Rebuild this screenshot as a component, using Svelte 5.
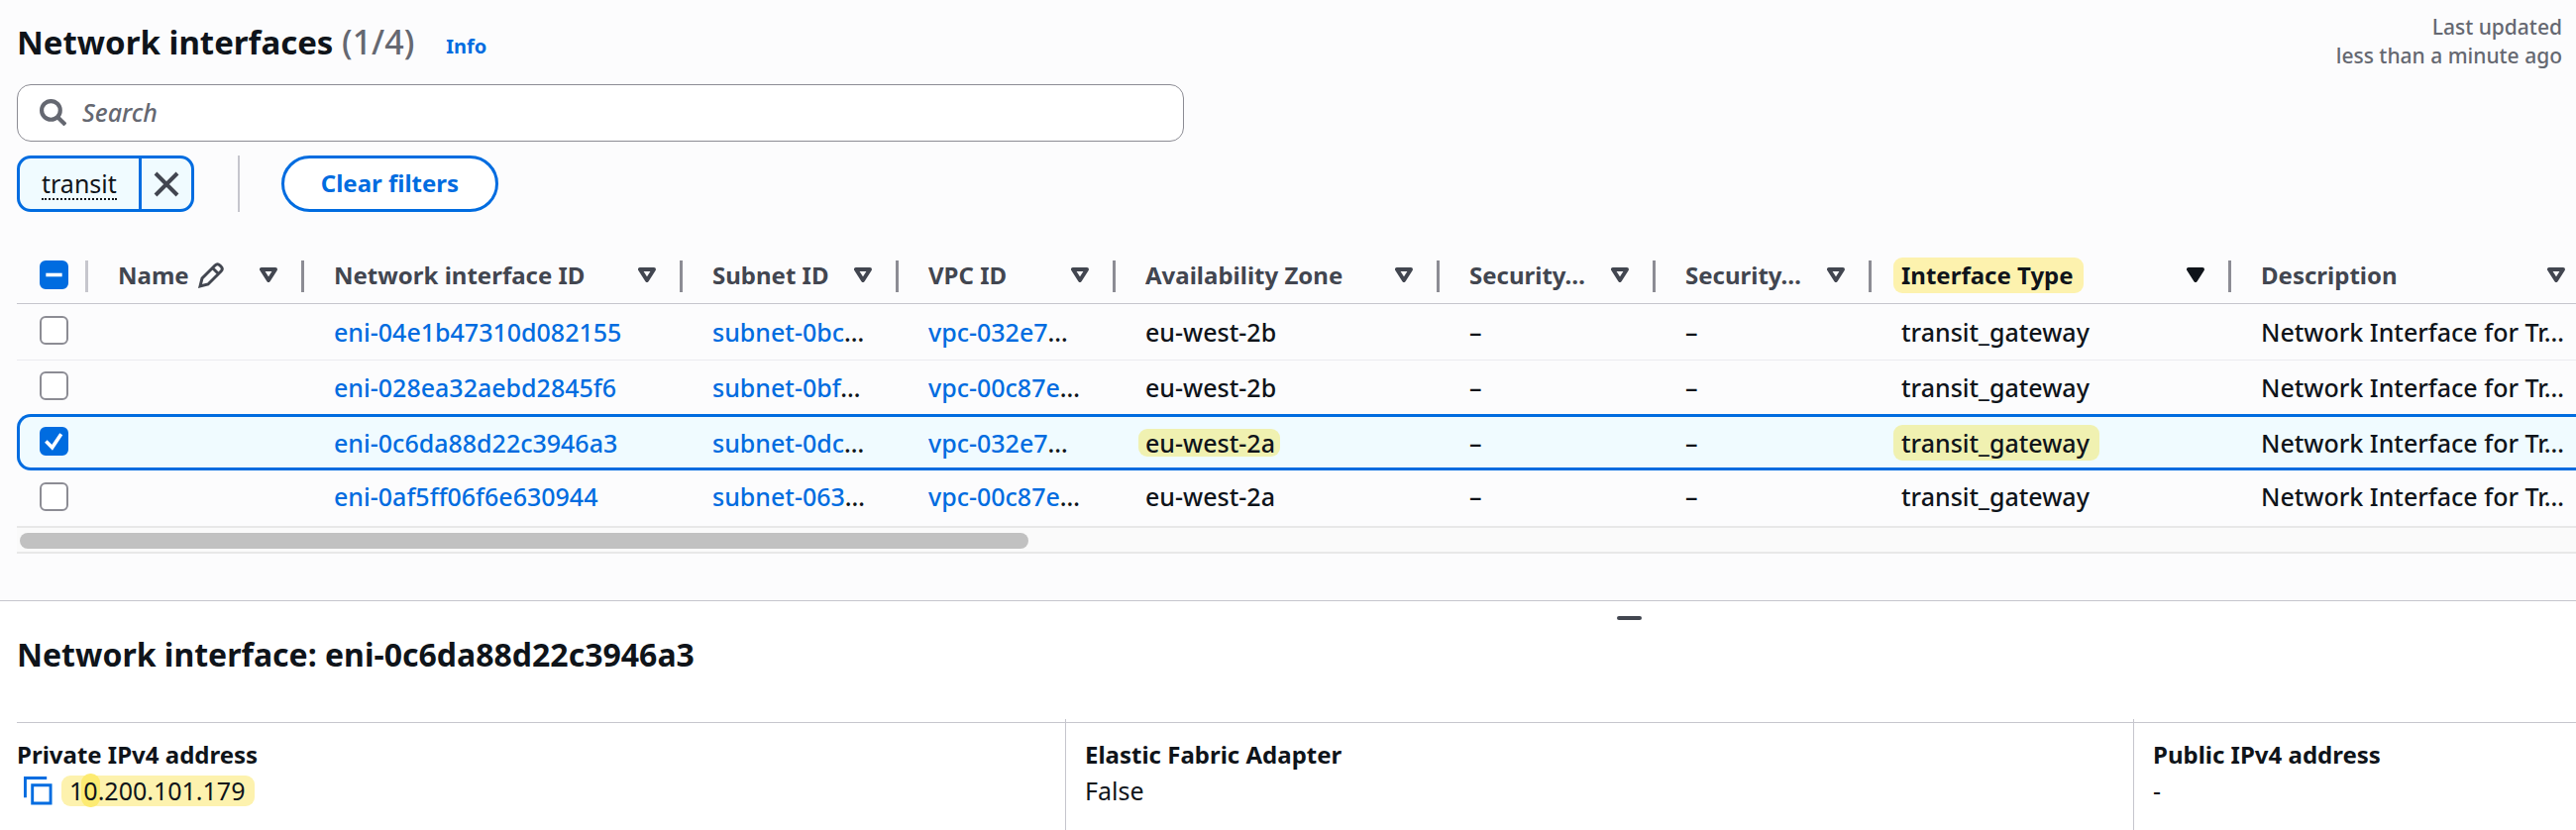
<script lang="ts">
  type Row = {
    id: string;
    subnet: string;
    vpc: string;
    zone: string;
    description: string;
  };

  const columns = [
    { label: "Name", width: 218, editable: true },
    { label: "Network interface ID", width: 382 },
    { label: "Subnet ID", width: 218 },
    { label: "VPC ID", width: 219 },
    { label: "Availability Zone", width: 327 },
    { label: "Security…", width: 218 },
    { label: "Security…", width: 218 },
    { label: "Interface Type", width: 363, sorted: true },
    { label: "Description" },
  ];

  const description = "Network Interface for Tr…";

  const rows: Row[] = [
    { id: "eni-04e1b47310d082155", subnet: "subnet-0bc", vpc: "vpc-032e7", zone: "eu-west-2b", description },
    { id: "eni-028ea32aebd2845f6", subnet: "subnet-0bf", vpc: "vpc-00c87e", zone: "eu-west-2b", description },
    { id: "eni-0c6da88d22c3946a3", subnet: "subnet-0dc", vpc: "vpc-032e7", zone: "eu-west-2a", description },
    { id: "eni-0af5ff06f6e630944", subnet: "subnet-063", vpc: "vpc-00c87e", zone: "eu-west-2a", description },
  ];

  let selected = $state("eni-0c6da88d22c3946a3");
  let query = $state("");
</script>

<main>
  <section class="list">
    <header>
      <h1>Network interfaces <span class="count">(1/4)</span></h1>
      <a class="info" href="#info">Info</a>
      <p class="updated">Last updated<br />less than a minute ago</p>
    </header>

    <label class="search">
      <svg viewBox="0 0 26 26" aria-hidden="true">
        <circle cx="11" cy="11" r="9" />
        <path d="M17.5 17.5 L25 25" />
      </svg>
      <input type="text" placeholder="Search" aria-label="Search" bind:value={query} />
    </label>

    <div class="filters">
      <div class="token">
        <button class="token-label"><span>transit</span></button>
        <button class="token-remove" aria-label="Remove filter">
          <svg viewBox="0 0 26 26" aria-hidden="true">
            <path d="M2 2 L24 24 M24 2 L2 24" />
          </svg>
        </button>
      </div>
      <div class="divider"></div>
      <button class="clear">Clear filters</button>
    </div>

    <table>
      <colgroup>
        <col class="select-col" />
        {#each columns as column}
          <col style:width={column.width ? `${column.width}px` : null} />
        {/each}
      </colgroup>
      <thead>
        <tr>
          <th class="select">
            <label class="check">
              <input type="checkbox" checked aria-label="Select all" />
              <svg viewBox="0 0 16 16" aria-hidden="true"><path d="M3.5 8 H12.5" /></svg>
            </label>
          </th>
          {#each columns as column}
            <th class:sorted={column.sorted}>
              <div class="head">
                <span class:mark={column.sorted}>{column.label}</span>
                {#if column.editable}
                  <svg class="pencil" viewBox="0 0 28 28" aria-hidden="true">
                    <path d="M3 25 L5 17 L18 4 Q20.500 1.500 23 4 L24 5 Q26.500 7.500 24 10 L11 23 Z M15.500 6.500 L21.500 12.500" />
                  </svg>
                {/if}
                <button class="sort" aria-label="Sort by {column.label}">
                  <svg viewBox="0 0 18 15" aria-hidden="true">
                    <path d="M2 2 H16 L9 13 Z" />
                  </svg>
                </button>
              </div>
            </th>
          {/each}
        </tr>
      </thead>
      <tbody>
        {#each rows as row}
          {@const active = row.id === selected}
          <tr class:active>
            <td class="select">
              <label class="check">
                <input
                  type="checkbox"
                  checked={active}
                  aria-label="Select {row.id}"
                  onchange={() => (selected = row.id)}
                />
                <svg viewBox="0 0 16 16" aria-hidden="true"><path d="M3.500 8 L7 11.500 L12 4" /></svg>
              </label>
            </td>
            <td></td>
            <td><a href="#{row.id}">{row.id}</a></td>
            <td><a href="#{row.subnet}">{row.subnet}</a>…</td>
            <td><a href="#{row.vpc}">{row.vpc}</a>…</td>
            <td><span class:mark={active} class:slim={active}>{row.zone}</span></td>
            <td>–</td>
            <td>–</td>
            <td><span class:mark={active}>transit_gateway</span></td>
            <td>{row.description}</td>
          </tr>
        {/each}
      </tbody>
    </table>
    <div class="scrollbar"><div class="thumb"></div></div>
  </section>

  <section class="details">
    <button class="handle" aria-label="Resize panel"></button>
    <h2>Network interface: {selected}</h2>
    <dl>
      <div>
        <dt>Private IPv4 address</dt>
        <dd>
          <button class="copy" aria-label="Copy address">
            <svg viewBox="0 0 30 30" aria-hidden="true">
              <path d="M1.500 22 V1.500 H24" />
              <path d="M9 9 H28 V28 H9 Z" />
            </svg>
          </button>
          <span class="mark ip">1<span class="cursor">0</span>.200.101.179</span>
        </dd>
      </div>
      <div>
        <dt>Elastic Fabric Adapter</dt>
        <dd>False</dd>
      </div>
      <div>
        <dt>Public IPv4 address</dt>
        <dd>-</dd>
      </div>
    </dl>
  </section>
</main>

<style>
  :global(body) {
    margin: 0;
    background: #ffffff;
  }

  main {
    color: #0f141a;
    font-family: "Noto Sans", sans-serif;
    font-size: 25px;
    font-weight: 500;
    line-height: 36px;
    overflow: hidden;
  }

  * {
    box-sizing: border-box;
  }

  button {
    padding: 0;
    border: 0;
    background: none;
    color: inherit;
    font: inherit;
    cursor: pointer;
  }

  svg {
    display: block;
    fill: none;
    stroke: currentColor;
    stroke-width: 4;
  }

  a {
    color: #006ce0;
    text-decoration: none;
  }

  .list {
    padding: 13px 0 47px 17px;
    background: #fcfcfd;
    border-bottom: 1px solid #c6c6cd;
  }

  header {
    display: flex;
    height: 72px;
    padding-right: 14px;
  }

  h1 {
    margin: 5px 32px 0 0;
    font-size: 33px;
    font-weight: 700;
    line-height: 48px;
  }

  .count {
    color: #656871;
    font-size: 34px;
    font-weight: 500;
  }

  .info {
    margin-top: 16px;
    font-size: 20px;
    font-weight: 700;
  }

  .updated {
    margin: 0 0 0 auto;
    color: #656871;
    font-size: 21px;
    line-height: 29px;
    text-align: right;
  }

  .search {
    display: flex;
    align-items: center;
    gap: 16px;
    width: 1178px;
    max-width: 100%;
    height: 58px;
    padding: 0 22px 2px;
    color: #656871;
    background: #ffffff;
    border: 1px solid #8c8c94;
    border-radius: 14px;
  }

  .search svg {
    width: 27px;
    height: 27px;
  }

  .search input {
    flex: 1;
    padding: 0;
    border: 0;
    outline: 0;
    background: none;
    font: inherit;
  }

  .search input::placeholder {
    color: #656871;
    font-style: italic;
    opacity: 1;
  }

  .filters {
    display: flex;
    height: 57px;
    margin: 14px 0 37px;
  }

  .token {
    display: flex;
    background: #f0fbff;
    border: 3px solid #006ce0;
    border-radius: 14px;
  }

  .token-label {
    padding: 0 22px;
    font-weight: 400;
  }

  .token-label span {
    display: block;
    line-height: 30px;
    border-bottom: 2px dotted #0f141a;
  }

  .token-remove {
    padding: 0 12px;
    color: #424650;
    border-left: 3px solid #006ce0;
  }

  .token-remove svg {
    width: 26px;
    height: 26px;
  }

  .divider {
    width: 2px;
    margin: 0 42px 0 44px;
    background: #c6c6cd;
  }

  .clear {
    padding: 0 37px 2px;
    color: #006ce0;
    background: #ffffff;
    border: 3px solid #006ce0;
    border-radius: 29px;
    font-size: 24px;
    font-weight: 700;
  }

  table {
    width: 100%;
    table-layout: fixed;
    border-collapse: separate;
    border-spacing: 0;
  }

  .select-col {
    width: 72px;
  }

  th,
  td {
    height: 56px;
    padding: 0 0 0 30px;
    text-align: left;
    white-space: nowrap;
  }

  th {
    padding-bottom: 2px;
    color: #424650;
    background: linear-gradient(#8c8c94, #8c8c94) right 12px / 3px 32px no-repeat;
    border-bottom: 1px solid #c6c6cd;
    font-size: 24px;
    font-weight: 700;
  }

  th:last-child {
    background: none;
  }

  th.select {
    background-image: linear-gradient(#c6c6cd, #c6c6cd);
  }

  .sorted {
    color: #0f141a;
  }

  .sorted .sort path {
    fill: currentColor;
  }

  .select {
    padding: 0 0 3px 23px;
  }

  .head {
    display: flex;
    align-items: center;
    padding-right: 27px;
  }

  th:last-child .head {
    padding-right: 11px;
  }

  .pencil {
    width: 28px;
    height: 28px;
    margin-left: 8px;
    stroke-width: 3;
  }

  .sort {
    margin-left: auto;
  }

  .sort svg {
    width: 18px;
    height: 15px;
    stroke-linejoin: round;
  }

  tbody td {
    height: 54px;
  }

  tbody tr:first-child td {
    height: 57px;
    border-bottom: 1px solid #ebebf0;
  }

  tbody tr:last-child td {
    height: 56px;
    padding-bottom: 4px;
  }

  .active td {
    height: 57px;
    background: #f0fbff;
    border: solid #006ce0;
    border-width: 3px 0;
  }

  .active td:first-child {
    padding-left: 20px;
    border-left-width: 3px;
    border-radius: 14px 0 0 14px;
  }

  .check {
    display: grid;
    width: 29px;
    height: 29px;
  }

  .check input,
  .check svg {
    grid-area: 1 / 1;
    width: 29px;
    height: 29px;
    margin: 0;
  }

  .check input {
    appearance: none;
    background: #ffffff;
    border: 2px solid #8c8c94;
    border-radius: 6px;
  }

  .check input:checked {
    background: #006ce0;
    border-color: #006ce0;
  }

  .check svg {
    color: #ffffff;
    stroke-width: 2;
    pointer-events: none;
  }

  .mark {
    margin-left: -8px;
    padding: 0 10px 0 8px;
    background: #fdf2ae;
    border-radius: 9px;
  }

  .active .mark {
    display: inline-block;
    background: #f0f1b1;
  }

  .active .slim {
    margin-left: -7px;
    padding: 0 5px 0 7px;
    line-height: 28px;
  }

  .scrollbar {
    height: 28px;
    padding: 5px 3px;
    background: #fafafa;
    border: solid #e8e8e8;
    border-width: 2px 0;
  }

  .thumb {
    width: 1018px;
    max-width: 100%;
    height: 16px;
    background: #c1c1c1;
    border-radius: 8px;
  }

  .details {
    display: flex;
    flex-direction: column;
    padding: 15px 0 0 17px;
  }

  .handle {
    width: 25px;
    height: 4px;
    margin-left: 1615px;
    background: #424650;
    border-radius: 2px;
  }

  h2 {
    margin: 13px 0 46px;
    font-size: 32px;
    font-weight: 700;
    line-height: 44px;
  }

  dl {
    display: grid;
    grid-template-columns: 1058px 1078px 1fr;
    margin: 0;
    border-top: 1px solid #c6c6cd;
  }

  dl div {
    height: 112px;
    margin-top: -4px;
    padding-top: 18px;
  }

  dl div + div {
    padding-left: 19px;
    border-left: 1px solid #c6c6cd;
  }

  dt {
    font-size: 24px;
    font-weight: 700;
  }

  dd {
    display: flex;
    align-items: center;
    min-height: 36px;
    margin: 0;
    font-weight: 400;
  }

  .copy {
    margin: 0 17px 0 7px;
    color: #006ce0;
  }

  .copy svg {
    width: 29px;
    height: 29px;
    stroke-width: 3;
  }

  .ip {
    line-height: 31px;
  }

  .cursor {
    padding: 0 2px;
    margin: 0 -2px;
    background: #fdeb72;
    border-radius: 9px;
  }
</style>
